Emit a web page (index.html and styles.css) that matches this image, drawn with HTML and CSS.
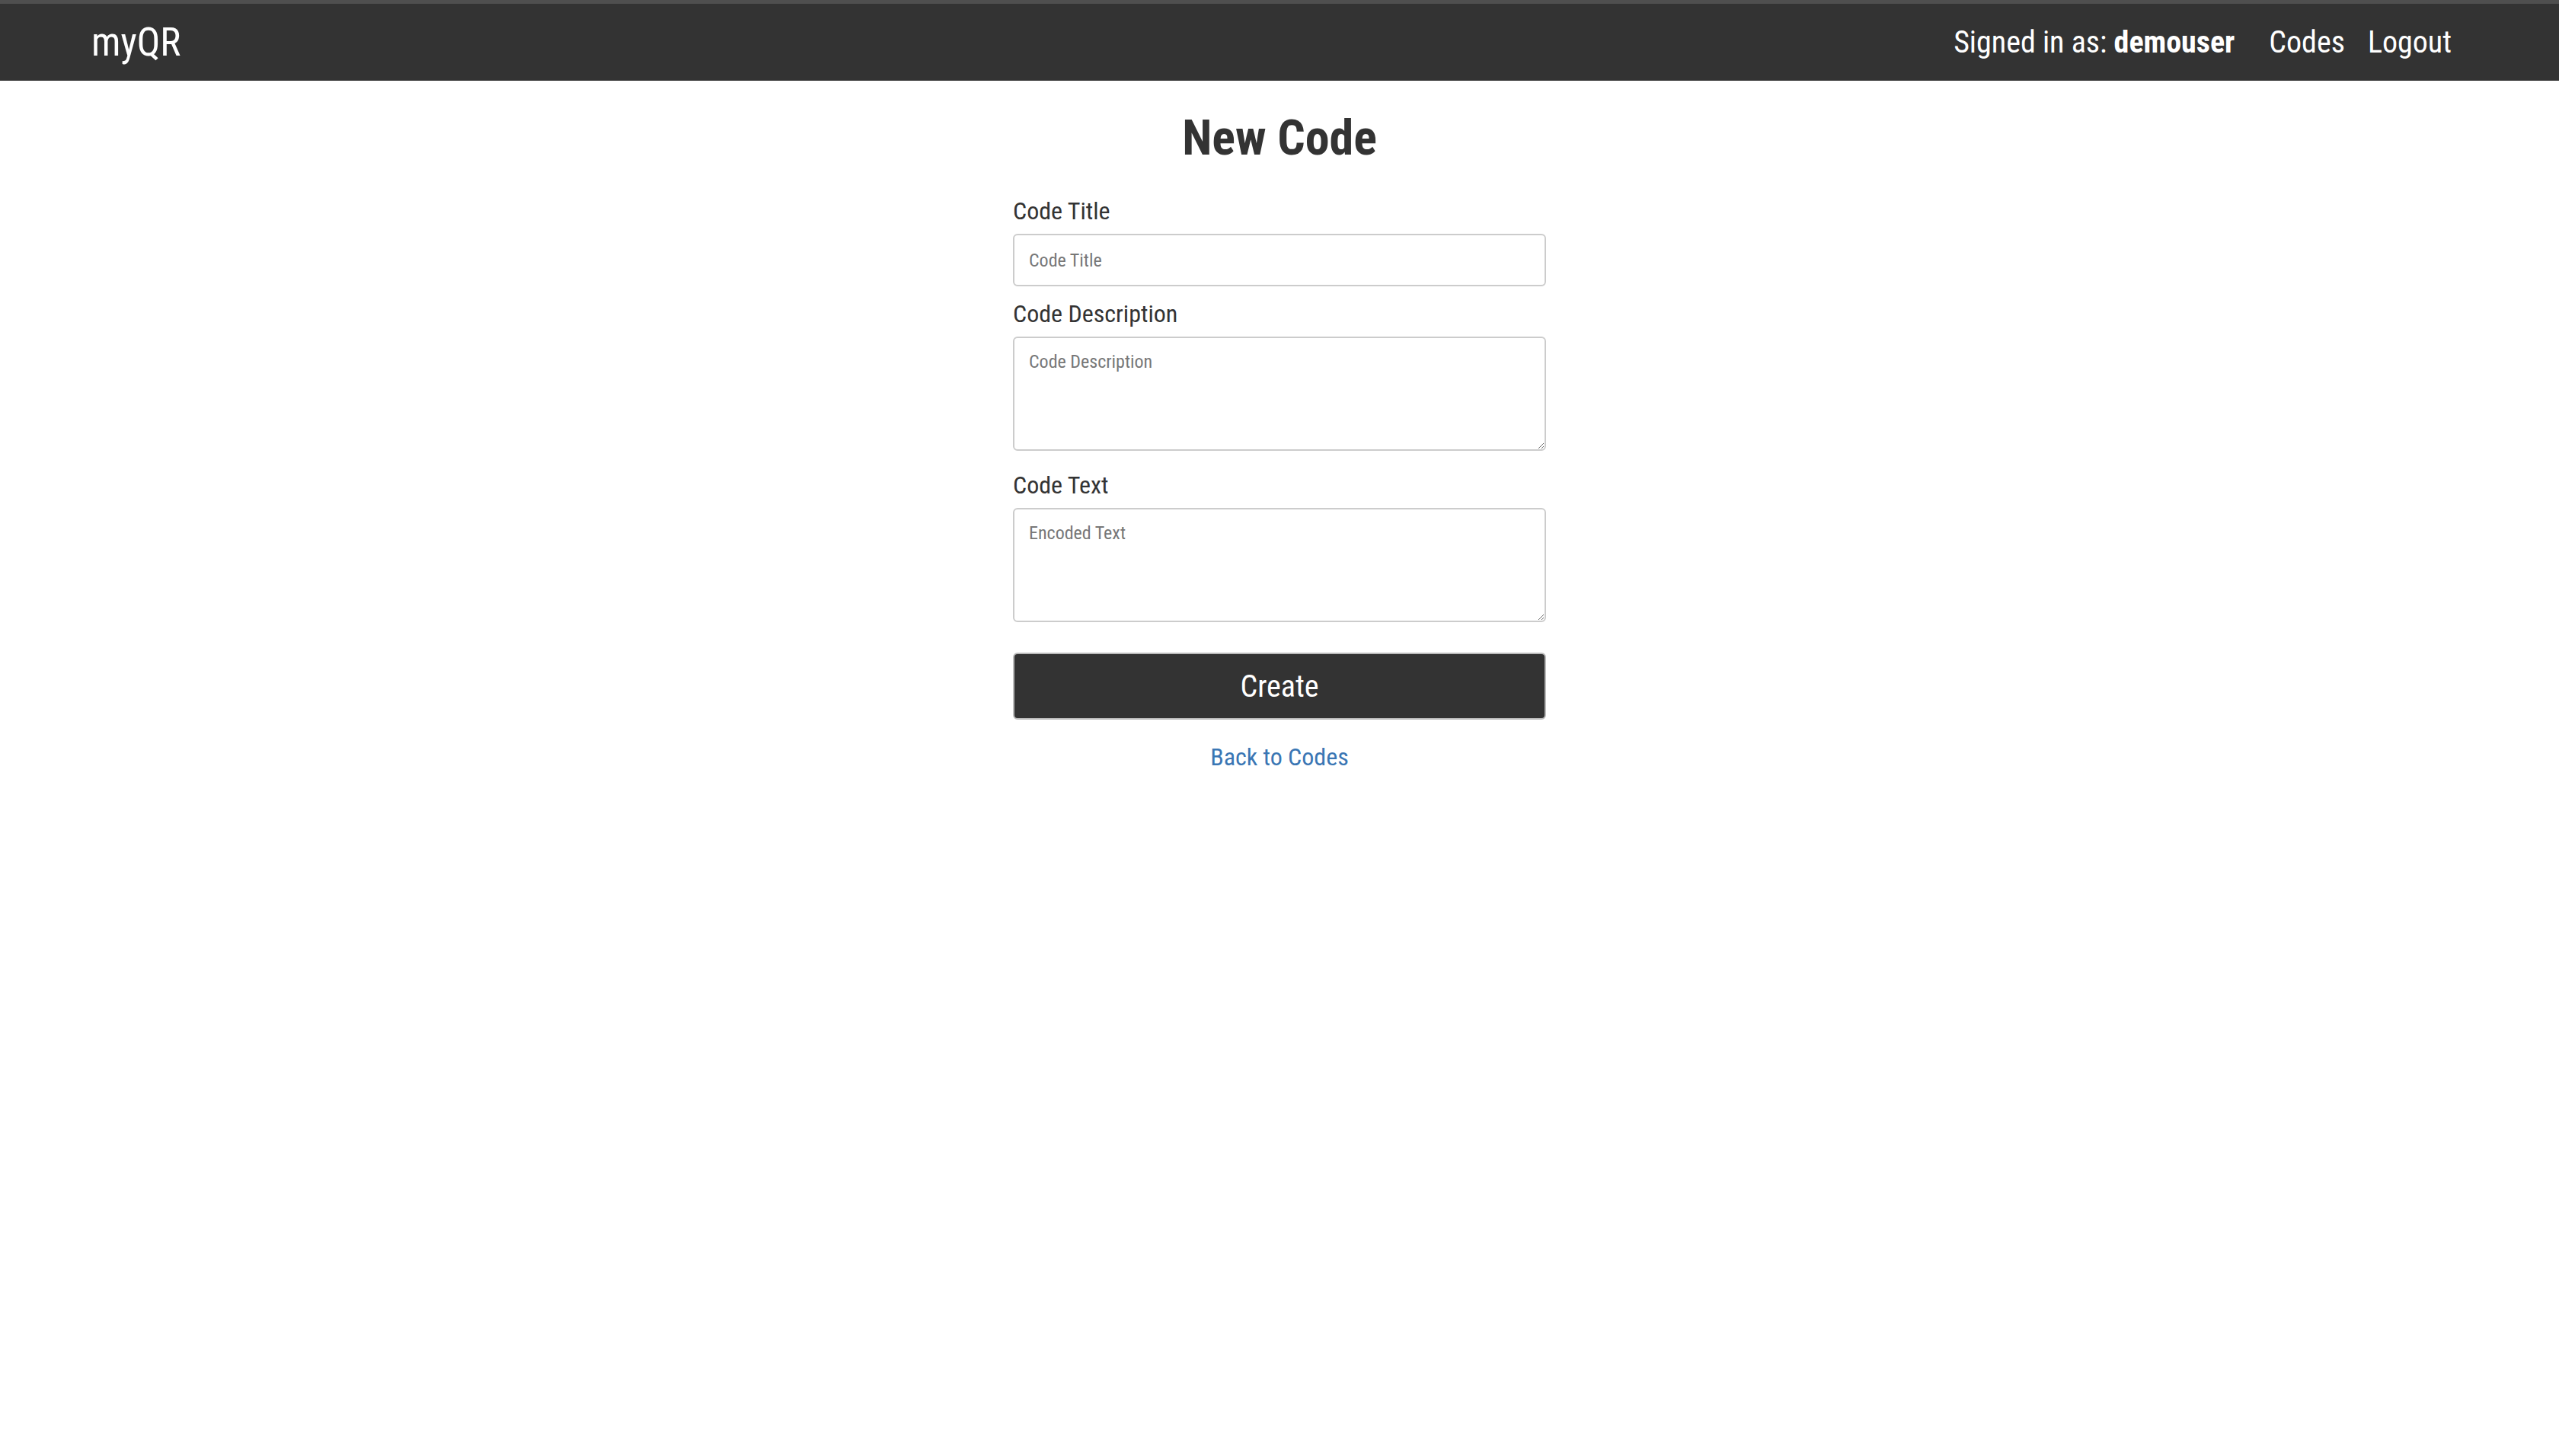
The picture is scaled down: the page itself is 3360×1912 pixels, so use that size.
FILE: index.html
```html
<!DOCTYPE html>
<html lang="en">
<head>
<meta charset="utf-8">
<title>myQR - New Code</title>
<link rel="stylesheet" href="styles.css">
</head>
<body>
<nav class="navbar">
  <a class="brand" href="#">myQR</a>
  <div class="nav-right">
    <span class="signed">Signed in as: <strong>demouser</strong></span>
    <a class="nav-link" href="#">Codes</a>
    <a class="nav-link" href="#">Logout</a>
  </div>
</nav>
<main class="container">
  <h1 class="title">New Code</h1>
  <form class="code-form">
    <div class="group">
      <label class="label" for="title">Code Title</label>
      <input class="control" id="title" type="text" placeholder="Code Title">
    </div>
    <div class="group group-area">
      <label class="label" for="desc">Code Description</label>
      <textarea class="control area" id="desc" placeholder="Code Description"></textarea>
    </div>
    <div class="group group-area">
      <label class="label" for="text">Code Text</label>
      <textarea class="control area" id="text" placeholder="Encoded Text"></textarea>
    </div>
    <button class="btn" type="button">Create</button>
  </form>
  <div class="back"><a href="#">Back to Codes</a></div>
</main>
</body>
</html>
```
FILE: styles.css
```css
* { box-sizing: border-box; }
html, body { margin: 0; padding: 0; background: #fff; }
body {
  font-family: "Roboto Condensed", "Roboto", "Liberation Sans", sans-serif;
  font-stretch: condensed;
  color: #333;
}
.navbar {
  height: 106px;
  background: #333;
  border-top: 5px solid #4f4f4f;
  display: flex;
  align-items: center;
  justify-content: space-between;
  padding: 0 141px 0 120px;
}
.brand {
  color: #fff;
  text-decoration: none;
  font-size: 51px;
  line-height: 1;
}
.nav-right {
  display: flex;
  align-items: center;
  font-size: 40px;
  color: #fff;
}
.signed { margin-right: 45px; }
.signed strong { font-weight: 700; }
.nav-link {
  color: #fff;
  text-decoration: none;
  margin-left: 30px;
}
.signed + .nav-link { margin-left: 0; }
.container {
  width: 700px;
  margin: 0 auto;
}
.title {
  margin: 38px 0 38px;
  font-size: 64px;
  line-height: 75px;
  font-weight: 700;
  text-align: center;
  color: #333;
}
.code-form { display: flex; flex-direction: column; }
.group { display: flex; flex-direction: column; margin-bottom: 16px; }
.group-area { margin-bottom: 25px; }
.label {
  font-size: 32px;
  line-height: 40px;
  margin-bottom: 10px;
  color: #333;
}
.control {
  display: block;
  width: 100%;
  height: 69px;
  border: 2px solid #ccc;
  border-radius: 6px;
  padding: 0 19px;
  font-family: inherit;
  font-stretch: condensed;
  font-size: 24px;
  color: #555;
  background: #fff;
}
.control::placeholder { color: #777; }
.area {
  height: 150px;
  padding-top: 14px;
  line-height: 34px;
  resize: vertical;
}
.btn {
  margin-top: 15px;
  height: 88px;
  width: 100%;
  background: #333;
  color: #fff;
  border: 2px solid #bbb;
  border-radius: 6px;
  font-family: inherit;
  font-stretch: condensed;
  font-size: 40px;
}
.back {
  text-align: center;
  margin-top: 28px;
  font-size: 32px;
  line-height: 42px;
}
.back a { color: #3a76b4; text-decoration: none; }
```
